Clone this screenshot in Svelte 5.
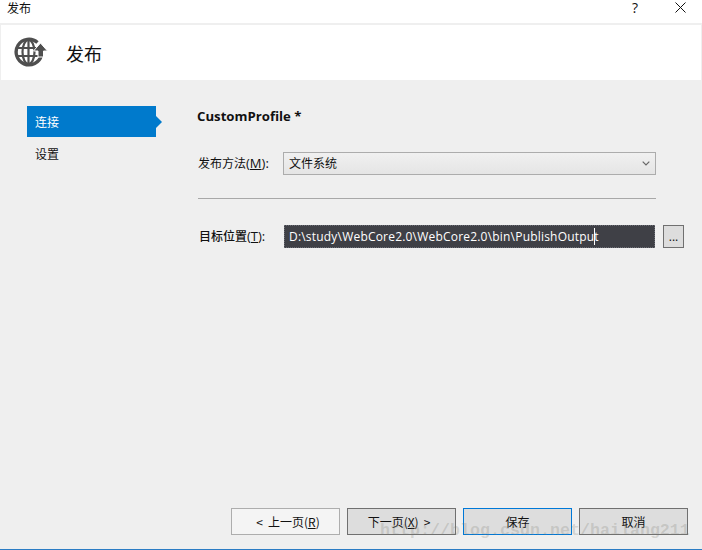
<script>
  const nav = [
    { label: '连接', active: true },
    { label: '设置', active: false }
  ];
</script>

<div class="win">
  <div class="titlebar">
    <span class="title">发布</span>
    <div class="controls">
      <span class="help">?</span>
      <svg class="close" width="11" height="11" viewBox="0 0 11 11"><path d="M0.5 0.5L10.5 10.5M10.5 0.5L0.5 10.5" stroke="#111" stroke-width="1" fill="none"/></svg>
    </div>
  </div>

  <header class="banner">
    <svg class="globe" width="34" height="30" viewBox="0 0 34 30">
      <g fill="none" stroke="#4f4f4f">
        <path d="M23.5 5.5A12.8 12.8 0 1 0 27.4 18" stroke-width="3.4"/>
        <ellipse cx="14.5" cy="15" rx="6" ry="12" stroke-width="2.2"/>
        <path d="M14.5 3V27M3 11H26M3 19H25" stroke-width="2.2"/>
      </g>
      <path d="M26.5 6L33.5 14H29.5V20H24V14H19.5Z" fill="#4f4f4f" stroke="#fff" stroke-width="1"/>
    </svg>
    <h1>发布</h1>
  </header>

  <div class="body">
    <nav class="side">
      {#each nav as item}
        <div class="item" class:active={item.active}>{item.label}</div>
      {/each}
    </nav>

    <main class="content">
      <h2>CustomProfile *</h2>
      <div class="row method">
        <span class="label">发布方法<span class="lat">(<u>M</u>):</span></span>
        <div class="select">
          <span>文件系统</span>
          <svg width="8" height="5" viewBox="0 0 8 5"><path d="M0.7 0.7L4 4L7.3 0.7" stroke="#666" stroke-width="1.2" fill="none"/></svg>
        </div>
      </div>
      <hr />
      <div class="row target">
        <span class="label tlabel">目标位置<span class="lat">(<u>T</u>):</span></span>
        <div class="input"><span class="sel">D:\study\WebCore2.0\WebCore2.0\bin\PublishOutpu</span>t</div>
        <button class="browse">...</button>
      </div>
    </main>
  </div>

  <footer class="foot">
    <button class="btn first"><span class="arrow">&lt;</span>上一页(<u>R</u>)</button>
    <button class="btn">下一页(<u>X</u>)<span class="arrow">&gt;</span></button>
    <button class="btn primary">保存</button>
    <button class="btn">取消</button>
  </footer>

  <div class="mark">http://blog.csdn.net/hailang211</div>
</div>

<style>
  :global(body) {
    margin: 0;
    background: #efefef;
  }
  .win {
    position: relative;
    width: 702px;
    height: 550px;
    display: flex;
    flex-direction: column;
    overflow: hidden;
    box-sizing: border-box;
    background: #efefef;
    border-bottom: 1px solid #2b7cc4;
    font-family: "Open Sans", "Noto Sans CJK SC", sans-serif;
    font-size: 12px;
    color: #111;
  }
  .titlebar {
    height: 23px;
    flex: none;
    background: #fff;
    display: flex;
    align-items: flex-start;
    justify-content: space-between;
    padding: 0 16px 0 7px;
  }
  .title {
    font-size: 12px;
    line-height: 15px;
    font-family: "Noto Sans CJK SC", sans-serif;
  }
  .controls {
    display: flex;
    align-items: flex-start;
    gap: 37px;
  }
  .help {
    font-size: 14px;
    line-height: 15px;
  }
  .close {
    margin-top: 2px;
  }
  .banner {
    flex: none;
    height: 55px;
    margin: 2px 1px 0;
    background: #fff;
    display: flex;
    align-items: center;
    padding-left: 13px;
  }
  .globe {
    flex: none;
    margin-top: -2px;
  }
  h1 {
    margin: 0 0 0 18px;
    font-size: 18px;
    font-weight: 400;
    font-family: "Noto Sans CJK SC", sans-serif;
  }
  .body {
    flex: 1;
    display: flex;
    min-height: 0;
    padding: 26px 0 0 27px;
  }
  .side {
    width: 129px;
    flex: none;
    display: flex;
    flex-direction: column;
    gap: 2px;
  }
  .item {
    position: relative;
    height: 31px;
    line-height: 30px;
    padding-left: 8px;
    font-family: "Noto Sans CJK SC", sans-serif;
  }
  .item.active {
    background: #007acc;
    color: #fff;
    line-height: 31px;
  }
  .item.active::after {
    content: "";
    position: absolute;
    left: 100%;
    top: 10px;
    border-left: 6px solid #007acc;
    border-top: 6px solid transparent;
    border-bottom: 6px solid transparent;
  }
  .content {
    margin-left: 41px;
    width: 489px;
    display: flex;
    flex-direction: column;
  }
  h2 {
    margin: 0;
    font-size: 13.2px;
    line-height: 20px;
    font-weight: 700;
    color: #111;
  }
  .row {
    display: flex;
    align-items: center;
  }
  .method {
    margin-top: 26px;
  }
  .label {
    width: 86px;
    padding-left: 1px;
    box-sizing: border-box;
    flex: none;
    white-space: nowrap;
    font-size: 12px;
    line-height: 20px;
    margin-top: -1px;
  }
  .lat {
    font-size: 13px;
  }
  .tlabel {
    width: 87px;
    padding-left: 2px;
    margin-top: 0;
    font-weight: 500;
  }
  .select {
    width: 373px;
    height: 23px;
    box-sizing: border-box;
    border: 1px solid #acacac;
    background: linear-gradient(#f0f0f0, #e5e5e5);
    display: flex;
    align-items: center;
    justify-content: space-between;
    padding: 0 5px 1px;
  }
  hr {
    width: 458px;
    height: 1px;
    margin: 23px 0 26px 1px;
    border: 0;
    background: #a8a8a8;
  }
  .input {
    width: 371px;
    height: 23px;
    box-sizing: border-box;
    background: #3f4046;
    color: #fff;
    padding-left: 5px;
    line-height: 23px;
    letter-spacing: 0.2px;
    outline: 1px dotted #6b6d75;
    outline-offset: -1px;
    white-space: nowrap;
  }
  .sel {
    border-right: 1px solid #fff;
    margin-right: -1px;
  }
  .browse {
    width: 21px;
    height: 23px;
    margin-left: 8px;
    padding: 0;
    box-sizing: border-box;
    border: 1px solid #707070;
    background: #dddddd;
    font: inherit;
    color: #111;
  }
  .foot {
    flex: none;
    display: flex;
    gap: 7px;
    justify-content: flex-end;
    padding: 0 14px 14px 0;
  }
  .btn {
    width: 109px;
    height: 27px;
    padding: 0;
    box-sizing: border-box;
    border: 1px solid #707070;
    background: #dddddd;
    font: inherit;
    font-family: "Noto Sans CJK SC", sans-serif;
    color: #111;
  }
  .btn.first {
    border-color: #adadad;
    background: #f4f4f4;
  }
  .btn.primary {
    border-color: #0078d7;
  }
  .arrow {
    margin: 0 5px;
  }
  .mark {
    position: absolute;
    left: 380px;
    top: 519px;
    font-family: "Liberation Mono", monospace;
    font-size: 16.67px;
    font-weight: 700;
    line-height: 24px;
    color: rgba(120, 120, 110, 0.24);
    white-space: nowrap;
    pointer-events: none;
  }
</style>
